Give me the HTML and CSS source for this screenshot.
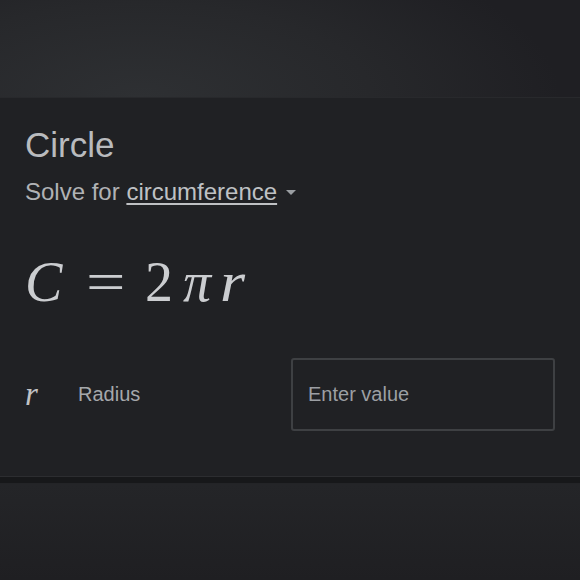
FILE: index.html
```html
<!DOCTYPE html>
<html lang="en">
<head>
<meta charset="utf-8">
<title>Circle</title>
<link rel="stylesheet" href="styles.css">
</head>
<body>
<div class="top"></div>
<section class="panel">
  <h1 class="title">Circle</h1>
  <div class="solve">Solve for <a class="link" href="#">circumference</a><span class="caret"></span></div>
  <div class="formula"><span class="v c">C</span><span class="eq">=</span><span class="num">2</span><span class="v pi">π</span><span class="v r">r</span></div>
  <div class="row">
    <span class="var">r</span>
    <span class="label">Radius</span>
    <div class="input">Enter value</div>
  </div>
</section>
<div class="sep"></div>
<div class="bottom"></div>
</body>
</html>
```
FILE: styles.css
```css
html, body {
  margin: 0;
  padding: 0;
  background: #202124;
  font-family: "Liberation Sans", Arial, sans-serif;
}
.top {
  height: 97px;
  background: radial-gradient(ellipse 420px 170px at 140px 97px, #2e3033 0%, #27282b 55%, #1f1f23 100%);
}
.panel {
  height: 379px;
  box-sizing: border-box;
  padding: 27px 25px 0 25px;
  background: #202124;
  border-top: 1px solid #28292c;
}
.title {
  margin: 0;
  font-weight: normal;
  font-size: 35px;
  line-height: 40px;
  color: #b9bbbe;
}
.solve {
  margin-top: 13px;
  font-size: 24px;
  line-height: 28px;
  color: #b0b2b5;
}
.link {
  color: #bfc1c4;
  text-decoration: underline;
  text-decoration-thickness: 2px;
  text-underline-offset: 3px;
}
.caret {
  display: inline-block;
  width: 0;
  height: 0;
  margin-left: 9px;
  vertical-align: 5px;
  border-left: 5px solid transparent;
  border-right: 5px solid transparent;
  border-top: 5px solid #9a9ea2;
}
.formula {
  margin-top: 46px;
  height: 60px;
  font-family: "Liberation Serif", "Times New Roman", serif;
  font-size: 56px;
  line-height: 60px;
  color: #cbcdd0;
  white-space: nowrap;
}
.formula span { display: inline-block; }
.v { font-style: italic; }
.eq { margin-left: 28px; transform: scaleX(1.25); }
.num { margin-left: 23px; }
.pi { margin-left: 10px; }
.r { margin-left: 9px; transform: scaleX(1.15); transform-origin: left center; }
.row {
  margin-top: 46px;
  display: grid;
  grid-template-columns: 53px 213px 264px;
  align-items: center;
}
.var {
  font-family: "Liberation Serif", "Times New Roman", serif;
  font-style: italic;
  font-size: 33px;
  color: #c0c2c5;
}
.label {
  font-size: 20px;
  color: #a5a8ab;
}
.input {
  height: 73px;
  box-sizing: border-box;
  border: 2px solid #3e4043;
  border-radius: 3px;
  padding-left: 15px;
  display: flex;
  align-items: center;
  font-size: 20px;
  color: #9c9fa3;
}
.sep {
  height: 8px;
  box-sizing: border-box;
  border-top: 1px solid #2c2d30;
  border-bottom: 1px solid #232427;
  background: #17181a;
}
.bottom {
  height: 96px;
  background: linear-gradient(#242528, #1f1f22);
}
```
